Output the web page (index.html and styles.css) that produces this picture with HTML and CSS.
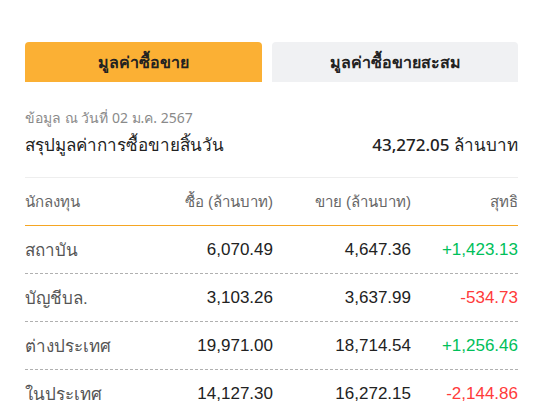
FILE: index.html
```html
<!DOCTYPE html>
<html lang="th">
<head>
<meta charset="utf-8">
<link rel="stylesheet" href="styles.css">
</head>
<body>
<div class="page">
  <div class="tabs">
    <div class="tab tab-active">มูลค่าซื้อขาย</div>
    <div class="tab tab-idle">มูลค่าซื้อขายสะสม</div>
  </div>
  <div class="date">ข้อมูล ณ วันที่ 02 ม.ค. 2567</div>
  <div class="summary">
    <span>สรุปมูลค่าการซื้อขายสิ้นวัน</span>
    <span>43,272.05 ล้านบาท</span>
  </div>
  <div class="table">
    <div class="row head">
      <div>นักลงทุน</div>
      <div class="num">ซื้อ (ล้านบาท)</div>
      <div class="num">ขาย (ล้านบาท)</div>
      <div class="num">สุทธิ</div>
    </div>
    <div class="row">
      <div class="name">สถาบัน</div>
      <div class="num">6,070.49</div>
      <div class="num">4,647.36</div>
      <div class="num up">+1,423.13</div>
    </div>
    <div class="row">
      <div class="name">บัญชีบล.</div>
      <div class="num">3,103.26</div>
      <div class="num">3,637.99</div>
      <div class="num down">-534.73</div>
    </div>
    <div class="row">
      <div class="name">ต่างประเทศ</div>
      <div class="num">19,971.00</div>
      <div class="num">18,714.54</div>
      <div class="num up">+1,256.46</div>
    </div>
    <div class="row">
      <div class="name">ในประเทศ</div>
      <div class="num">14,127.30</div>
      <div class="num">16,272.15</div>
      <div class="num down">-2,144.86</div>
    </div>
  </div>
</div>
</body>
</html>
```
FILE: styles.css
```css
html, body {
  margin: 0;
  background: #ffffff;
}
body {
  font-family: "Noto Sans", "Liberation Sans", sans-serif;
  color: #222222;
}
.page {
  padding: 42px 39px 0 25px;
}
.tabs {
  display: flex;
  gap: 10px;
  height: 40px;
}
.tab {
  display: flex;
  align-items: center;
  justify-content: center;
  border-radius: 4px 4px 0 0;
  font-size: 16px;
  font-weight: 700;
  color: #222222;
}
.tab-active {
  flex: 0 0 237px;
  background: #fbb034;
}
.tab-idle {
  flex: 1;
  background: #f0f1f3;
}
.date {
  margin-top: 26px;
  font-size: 14px;
  color: #8a8a8a;
  line-height: 20px;
}
.summary {
  display: flex;
  justify-content: space-between;
  margin-top: 4px;
  font-size: 17px;
  font-weight: 500;
  line-height: 26px;
  padding-bottom: 19px;
  border-bottom: 1px solid #eeeeee;
}
.row {
  display: grid;
  grid-template-columns: 110px 138px 138px 107px;
  align-items: center;
  height: 47px;
  border-bottom: 1px dashed #b0b0b0;
  font-size: 17px;
  font-family: "Liberation Sans", "Noto Sans", sans-serif;
}
.row .name {
  color: #555555;
}
.row.head {
  border-bottom: 1px solid #f5a623;
  color: #666666;
  font-size: 15px;
}
.row:last-child {
  border-bottom: none;
}
.num {
  text-align: right;
}
.up {
  color: #00c05a;
}
.down {
  color: #ff3b3b;
}
```
